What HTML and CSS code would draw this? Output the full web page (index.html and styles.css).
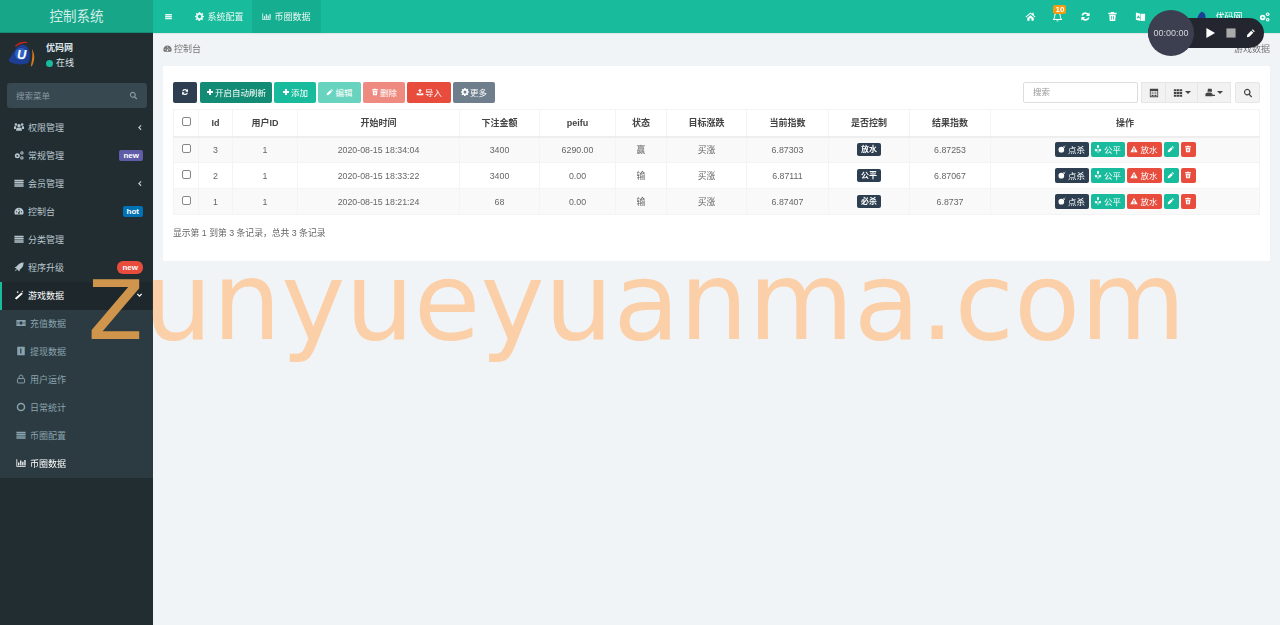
FILE: index.html
```html
<!DOCTYPE html>
<html lang="en">
<head>
<meta charset="UTF-8">
<title>控制系统</title>
<link rel="stylesheet" href="styles.css">
</head>
<body>
  <svg class="defs" xmlns="http://www.w3.org/2000/svg">
    <symbol id="i-bars" viewBox="0 0 24 24"><path d="M3 5h18v3.500H3zM3 10.300h18v3.500H3zM3 15.600h18v3.500H3z"/></symbol>
    <symbol id="i-cog" viewBox="0 0 24 24"><path fill-rule="evenodd" d="M10 2h4l.6 3 2.300 1 2.600-1.700 2.800 2.800L20 9.700l1 2.300 3 .6v3l-3 .6-1 2.300 1.700 2.600-2.800 2.800-2.600-1.700-2.300 1-.6 3h-4l-.6-3-2.300-1-2.600 1.700-2.800-2.800L4 18.500l-1-2.300-3-.6v-3l3-.6 1-2.300-1.700-2.600 2.800-2.800L7.100 6l2.300-1zM12 9.500a4.500 4.500 0 1 0 0 9 4.500 4.500 0 0 0 0-9z" transform="translate(0 -2)"/></symbol>
    <symbol id="i-chart" viewBox="0 0 24 24"><path d="M1 3h2v16h20v2H1zM5 11h3v7H5zM10 6h3v12h-3zM15 9h3v9h-3zM20 5h3v13h-3z"/></symbol>
    <symbol id="i-home" viewBox="0 0 24 24"><path d="M12 3 1 12.500l1.500 1.700L12 6l9.500 8.200 1.500-1.700-4-3.500V4h-3v2.400zM5 15l7-6 7 6v6h-5v-5h-4v5H5z"/></symbol>
    <symbol id="i-bell" viewBox="0 0 24 24"><path fill-rule="evenodd" d="M12 2c1 0 1.500.7 1.500 1.500C17 4.300 19 7 19 10.500c0 4 1 6 3 7.500v1.500H2V18c2-1.500 3-3.500 3-7.500C5 7 7 4.300 10.500 3.500 10.500 2.700 11 2 12 2zm0 3.300c-3 0-5 2-5 5.200 0 3-.6 5.300-1.800 7h13.600c-1.200-1.700-1.800-4-1.800-7 0-3.200-2-5.200-5-5.200zM9.500 20.500h5a2.500 2.500 0 0 1-5 0z"/></symbol>
    <symbol id="i-refresh" viewBox="0 0 24 24"><path d="M12 3a9 9 0 0 1 6.300 2.600L21 3v8h-8l2.900-2.900A5.600 5.600 0 0 0 6.700 10H3.200A9 9 0 0 1 12 3zM3 13h8l-2.900 2.900A5.600 5.600 0 0 0 17.300 14h3.500A9 9 0 0 1 5.700 18.400L3 21z"/></symbol>
    <symbol id="i-trash" viewBox="0 0 24 24"><path fill-rule="evenodd" d="M9 2h6l1 2h5v3H3V4h5zM5 8h14l-1 14H6zm4 3v8h1.500v-8zm4.500 0v8H15v-8z"/></symbol>
    <symbol id="i-lang" viewBox="0 0 24 24"><path fill-rule="evenodd" d="M2 3l10 3v16L2 19zm5 6-3 7h2l.5-1.300h3L10 16h2zM13 6h9v15l-9 1z" /></symbol>
    <symbol id="i-cogs" viewBox="0 0 24 24"><circle cx="8" cy="14" r="6"/><circle cx="19" cy="7" r="4"/><circle cx="19" cy="19" r="4"/><circle cx="8" cy="14" r="2.200" fill="var(--hole, #18bc9c)"/><circle cx="19" cy="7" r="1.500" fill="var(--hole, #18bc9c)"/><circle cx="19" cy="19" r="1.500" fill="var(--hole, #18bc9c)"/></symbol>
    <symbol id="i-search" viewBox="0 0 24 24"><path fill-rule="evenodd" d="M10 2a8 8 0 0 1 6.500 12.700l5.500 5.500-2.300 2.300-5.500-5.500A8 8 0 1 1 10 2zm0 3a5 5 0 1 0 0 10 5 5 0 0 0 0-10z"/></symbol>
    <symbol id="i-columns" viewBox="0 0 24 24"><path fill-rule="evenodd" d="M2 2h20v20H2zm2 5v13h16V7zm2 2h5v2H6zm0 4h5v2H6zm0 4h5v2H6zm7-8h5v2h-5zm0 4h5v2h-5zm0 4h5v2h-5z"/></symbol>
    <symbol id="i-th" viewBox="0 0 24 24"><path d="M2 3h6v5H2zM9 3h6v5H9zM16 3h6v5h-6zM2 9.500h6v5H2zM9 9.500h6v5H9zM16 9.500h6v5h-6zM2 16h6v5H2zM9 16h6v5H9zM16 16h6v5h-6z"/></symbol>
    <symbol id="i-export" viewBox="0 0 24 24"><path d="M7 2h9l1 7H6zM1 14c2-2 5-3 9-3s6 1 8 3v6H1zM17 16h7v3h-7z"/></symbol>
    <symbol id="i-plus" viewBox="0 0 24 24"><path d="M9 3h6v6h6v6h-6v6H9v-6H3V9h6z"/></symbol>
    <symbol id="i-pencil" viewBox="0 0 24 24"><path d="M16 3l5 5-2 2-5-5zM12.500 6.500l5 5L8 21l-6 1 1-6z"/></symbol>
    <symbol id="i-upload" viewBox="0 0 24 24"><path d="M12 2l6 7h-4v6h-4V9H6zM2 16h6v1.500h8V16h6v6H2z"/></symbol>
    <symbol id="i-gauge" viewBox="0 0 24 24"><path fill-rule="evenodd" d="M12 4a11 11 0 0 1 11 11c0 2-.5 3.800-1.400 5.400H2.400A11 11 0 0 1 1 15 11 11 0 0 1 12 4zm0 2.500a1.500 1.500 0 1 0 0 3 1.500 1.500 0 0 0 0-3zm-6 6a1.500 1.500 0 1 0 0 3 1.500 1.500 0 0 0 0-3zm12 0a1.500 1.500 0 1 0 0 3 1.500 1.500 0 0 0 0-3zM15 10l-4 5a2 2 0 1 0 2.500 1z"/></symbol>
    <symbol id="i-users" viewBox="0 0 24 24"><circle cx="12" cy="9" r="4"/><circle cx="4.500" cy="6" r="3"/><circle cx="19.500" cy="6" r="3"/><path d="M6 14h12l1 7H5zM0 10h5l-.500 7H0zM19 10h5v7h-4.500z"/></symbol>
    <symbol id="i-list" viewBox="0 0 24 24"><path d="M1 4h22v3.500H1zM1 8.800h22v3H1zM1 13h22v3H1zM1 17.200h22V21H1z"/></symbol>
    <symbol id="i-rocket" viewBox="0 0 24 24"><path d="M23 1c0 8-3 13-9 17l-1 5-4-4-4-4-4-1 5-3C10 5 15 1 23 1zM5 17l2 2-5 3z"/></symbol>
    <symbol id="i-magic" viewBox="0 0 24 24"><path d="M18 6l3 3L6 23l-4-3zM9 2l1 2 2 1-2 1-1 2-1-2-2-1 2-1zM20 1l.7 2 2 .7-2 .7-.7 2-.7-2-2-.7 2-.7z"/></symbol>
    <symbol id="i-money" viewBox="0 0 24 24"><path fill-rule="evenodd" d="M1 5h22v14H1zm11 3a4 4 0 1 0 0 8 4 4 0 0 0 0-8zM4 9v6h1.500V9zm14.500 0v6H20V9z"/></symbol>
    <symbol id="i-book" viewBox="0 0 24 24"><path fill-rule="evenodd" d="M3 2h18v20H3zm7 4v12h3V6z"/></symbol>
    <symbol id="i-user" viewBox="0 0 24 24"><path fill="none" stroke="currentColor" stroke-width="2.200" d="M7.500 11V7a4.500 4.500 0 0 1 9 0v4M5 11h14a1.500 1.500 0 0 1 1.500 1.500V20a1.500 1.500 0 0 1-1.500 1.500H5A1.500 1.500 0 0 1 3.500 20v-7.500A1.500 1.500 0 0 1 5 11z"/></symbol>
    <symbol id="i-circle" viewBox="0 0 24 24"><circle cx="12" cy="12" r="8.500" fill="none" stroke="currentColor" stroke-width="3.500"/></symbol>
    <symbol id="i-left" viewBox="0 0 24 24"><path d="M16 3l3 3-6 6 6 6-3 3-9-9z"/></symbol>
    <symbol id="i-down" viewBox="0 0 24 24"><path d="M3 8l3-3 6 6 6-6 3 3-9 9z"/></symbol>
    <symbol id="i-bomb" viewBox="0 0 24 24"><circle cx="10" cy="14" r="8.500"/><path d="M15 5l3-2 3 3-2 3zM21 1l2 1-1 2z"/></symbol>
    <symbol id="i-leaf" viewBox="0 0 24 24"><path d="M9 1h6v6l-2 3h-2L9 7zM2 15l3-4 6 3v2l-5 4zM22 15l-3-4-6 3v2l5 4zM10.500 19h3v4h-3z"/></symbol>
    <symbol id="i-warn" viewBox="0 0 24 24"><path fill-rule="evenodd" d="M12 2l11 20H1zm-1.500 7v7h3V9zm0 8.500V20h3v-2.500z"/></symbol>
    <symbol id="i-play" viewBox="0 0 24 24"><path d="M3 1l19 11L3 23z"/></symbol>
    <symbol id="i-stop" viewBox="0 0 24 24"><path d="M1 1h22v22H1z"/></symbol>
  </svg>

  <div class="wrapper">
    <aside class="sidebar">
      <div class="logo">控制系统</div>
      <div class="user-panel">
        <svg class="avatar" viewBox="0 0 28 28">
          <path fill="#c6231f" d="M7 6c3-4 8-5 12-4 1 .5 0 1-1 1-4 0-7 1-10 4z"/>
          <path fill="#1c3f94" d="M13 5c3-1 7 1 8 5 2 5 1 10-1 13-5 2-12 2-18-1-1-1-2-2 0-4C5 13 8 7 13 5z"/>
          <circle cx="13" cy="14" r="6" fill="#2f62c4"/>
          <path fill="#d77a1f" d="M24 9c3 5 3 11 0 17-1 1-1 0-1-1 1-5 2-10 1-16z"/>
          <text x="9" y="19" class="avatar-u">U</text>
        </svg>
        <div class="user-info">
          <div class="user-name">优码网</div>
          <div class="user-status"><span class="dot"></span>在线</div>
        </div>
      </div>
      <div class="side-search"><span>搜索菜单</span><svg class="ic"><use href="#i-search"/></svg></div>
      <ul class="menu">
        <li><svg class="ic"><use href="#i-users"/></svg><span class="grow">权限管理</span><svg class="ic arrow"><use href="#i-left"/></svg></li>
        <li><svg class="ic cogs-dark"><use href="#i-cogs"/></svg><span class="grow">常规管理</span><span class="tag tag-new">new</span></li>
        <li><svg class="ic"><use href="#i-list"/></svg><span class="grow">会员管理</span><svg class="ic arrow"><use href="#i-left"/></svg></li>
        <li><svg class="ic"><use href="#i-gauge"/></svg><span class="grow">控制台</span><span class="tag tag-hot">hot</span></li>
        <li><svg class="ic"><use href="#i-list"/></svg><span class="grow">分类管理</span></li>
        <li><svg class="ic"><use href="#i-rocket"/></svg><span class="grow">程序升级</span><span class="tag tag-red">new</span></li>
        <li class="open"><svg class="ic"><use href="#i-magic"/></svg><span class="grow">游戏数据</span><svg class="ic arrow"><use href="#i-down"/></svg></li>
      </ul>
      <ul class="submenu">
        <li><svg class="ic"><use href="#i-money"/></svg>充值数据</li>
        <li><svg class="ic"><use href="#i-book"/></svg>提现数据</li>
        <li><svg class="ic"><use href="#i-user"/></svg>用户运作</li>
        <li><svg class="ic"><use href="#i-circle"/></svg>日常统计</li>
        <li><svg class="ic"><use href="#i-list"/></svg>币圈配置</li>
        <li class="current"><svg class="ic"><use href="#i-chart"/></svg>币圈数据</li>
      </ul>
    </aside>

    <div class="main">
      <header class="topbar">
        <a class="nav-item nav-toggle"><svg class="ic"><use href="#i-bars"/></svg></a>
        <a class="nav-item nav-config"><svg class="ic"><use href="#i-cog"/></svg>系统配置</a>
        <a class="nav-item active"><svg class="ic"><use href="#i-chart"/></svg>币圈数据</a>
        <div class="top-right">
          <svg class="ic"><use href="#i-home"/></svg>
          <span class="bell"><svg class="ic"><use href="#i-bell"/></svg><b class="bell-badge">10</b></span>
          <svg class="ic"><use href="#i-refresh"/></svg>
          <svg class="ic"><use href="#i-trash"/></svg>
          <svg class="ic"><use href="#i-lang"/></svg>
          <span class="top-user"><svg class="top-avatar" viewBox="0 0 32 32"><path fill="#1c3f94" d="M15 4c5 0 9 5 9 11s-1 10-3 11c-4 1-11 2-17-1C5 16 9 8 15 4z"/></svg>优码网</span>
          <svg class="ic"><use href="#i-cogs"/></svg>
        </div>
      </header>

      <div class="content">
        <div class="crumbs">
          <span><svg class="ic"><use href="#i-gauge"/></svg>控制台</span>
          <span>游戏数据</span>
        </div>
        <div class="card">
          <div class="toolbar">
            <a class="btn btn-dark btn-icon"><svg class="ic"><use href="#i-refresh"/></svg></a>
            <a class="btn btn-deep"><svg class="ic"><use href="#i-plus"/></svg>开启自动刷新</a>
            <a class="btn btn-green"><svg class="ic"><use href="#i-plus"/></svg>添加</a>
            <a class="btn btn-green faded btn-edit"><svg class="ic"><use href="#i-pencil"/></svg>编辑</a>
            <a class="btn btn-red faded"><svg class="ic"><use href="#i-trash"/></svg>删除</a>
            <a class="btn btn-red btn-import"><svg class="ic"><use href="#i-upload"/></svg>导入</a>
            <a class="btn btn-grey"><svg class="ic"><use href="#i-cog"/></svg>更多</a>
            <div class="tools-right">
              <div class="table-search">搜索</div>
              <div class="btn-group">
                <a class="tool"><svg class="ic"><use href="#i-columns"/></svg></a>
                <a class="tool"><svg class="ic"><use href="#i-th"/></svg><i class="caret"></i></a>
                <a class="tool"><svg class="ic"><use href="#i-export"/></svg><i class="caret"></i></a>
              </div>
              <a class="tool tool-single"><svg class="ic"><use href="#i-search"/></svg></a>
            </div>
          </div>

          <table class="data">
            <colgroup>
              <col class="c-check"><col class="c-id"><col class="c-uid"><col class="c-time"><col class="c-bet">
              <col class="c-pei"><col class="c-state"><col class="c-bet"><col class="c-cur"><col class="c-index"><col class="c-index"><col>
            </colgroup>
            <thead>
              <tr>
                <th><span class="check"></span></th><th>Id</th><th>用户ID</th><th>开始时间</th><th>下注金额</th><th>peifu</th>
                <th>状态</th><th>目标涨跌</th><th>当前指数</th><th>是否控制</th><th>结果指数</th><th>操作</th>
              </tr>
            </thead>
            <tbody>
              <tr>
                <td><span class="check"></span></td><td>3</td><td>1</td><td>2020-08-15 18:34:04</td><td>3400</td><td>6290.00</td>
                <td>赢</td><td>买涨</td><td>6.87303</td><td><span class="label">放水</span></td><td>6.87253</td>
                <td><div class="ops">
                  <a class="op btn-dark"><svg class="ic"><use href="#i-bomb"/></svg>点杀</a>
                  <a class="op btn-green"><svg class="ic"><use href="#i-leaf"/></svg>公平</a>
                  <a class="op btn-red op-wide"><svg class="ic"><use href="#i-warn"/></svg>放水</a>
                  <a class="op op-icon btn-green"><svg class="ic"><use href="#i-pencil"/></svg></a>
                  <a class="op op-icon btn-red"><svg class="ic"><use href="#i-trash"/></svg></a>
                </div></td>
              </tr>
              <tr>
                <td><span class="check"></span></td><td>2</td><td>1</td><td>2020-08-15 18:33:22</td><td>3400</td><td>0.00</td>
                <td>输</td><td>买涨</td><td>6.87111</td><td><span class="label">公平</span></td><td>6.87067</td>
                <td><div class="ops">
                  <a class="op btn-dark"><svg class="ic"><use href="#i-bomb"/></svg>点杀</a>
                  <a class="op btn-green"><svg class="ic"><use href="#i-leaf"/></svg>公平</a>
                  <a class="op btn-red op-wide"><svg class="ic"><use href="#i-warn"/></svg>放水</a>
                  <a class="op op-icon btn-green"><svg class="ic"><use href="#i-pencil"/></svg></a>
                  <a class="op op-icon btn-red"><svg class="ic"><use href="#i-trash"/></svg></a>
                </div></td>
              </tr>
              <tr>
                <td><span class="check"></span></td><td>1</td><td>1</td><td>2020-08-15 18:21:24</td><td>68</td><td>0.00</td>
                <td>输</td><td>买涨</td><td>6.87407</td><td><span class="label">必杀</span></td><td>6.8737</td>
                <td><div class="ops">
                  <a class="op btn-dark"><svg class="ic"><use href="#i-bomb"/></svg>点杀</a>
                  <a class="op btn-green"><svg class="ic"><use href="#i-leaf"/></svg>公平</a>
                  <a class="op btn-red op-wide"><svg class="ic"><use href="#i-warn"/></svg>放水</a>
                  <a class="op op-icon btn-green"><svg class="ic"><use href="#i-pencil"/></svg></a>
                  <a class="op op-icon btn-red"><svg class="ic"><use href="#i-trash"/></svg></a>
                </div></td>
              </tr>
            </tbody>
          </table>
          <div class="pager-info">显示第 1 到第 3 条记录，总共 3 条记录</div>
        </div>
      </div>
    </div>
  </div>

  <!-- screen recorder widget over the page -->
  <div class="recorder">
    <div class="rec-time">00:00:00</div>
    <svg class="rec-ic rec-play"><use href="#i-play"/></svg>
    <svg class="rec-ic rec-stop"><use href="#i-stop"/></svg>
    <svg class="rec-ic"><use href="#i-pencil"/></svg>
  </div>

  <div class="watermark"><span class="wm-first">z</span>unyueyuanma.com</div>
</body>
</html>
```

FILE: styles.css
```css
/* Basic layout */
* {
  box-sizing: border-box;
}
html, body {
  margin: 0;
  height: 100%;
  overflow: hidden;
}
body {
  font-family: "Liberation Sans", "Noto Sans CJK SC", sans-serif;
  font-size: 9px;
  color: #666;
  background: #f1f4f6;
  /* the source capture is slightly soft */
  filter: blur(.3px);
}
.defs {
  position: absolute;
  width: 0;
  height: 0;
}
.ic {
  width: 10px;
  height: 10px;
  fill: currentColor;
  flex: none;
}
.wrapper {
  display: flex;
  height: 625px;
}

/* Sidebar */
.sidebar {
  width: 153px;
  flex: none;
  background: #222d32;
  color: #b8c7ce;
}
.logo {
  height: 33px;
  line-height: 33px;
  text-align: center;
  font-size: 13.5px;
  color: #d0eee7;
  background: #18a689;
  border-bottom: 1px solid #148f76;
}
.user-panel {
  display: flex;
  height: 50px;
  padding: 7px 0 0 8px;
}
.avatar {
  width: 28px;
  height: 28px;
}
.avatar-u {
  font-size: 13px;
  font-weight: bold;
  font-style: italic;
  fill: #fff;
}
.user-info {
  margin-left: 10px;
  padding-top: 1px;
  line-height: 15px;
  color: #dfe6ea;
}
.user-name {
  font-weight: bold;
}
.user-status {
  display: flex;
  align-items: center;
}
.dot {
  width: 7px;
  height: 7px;
  margin-right: 3px;
  border-radius: 50%;
  background: #18bc9c;
}
.side-search {
  display: flex;
  align-items: center;
  justify-content: space-between;
  height: 25px;
  margin: 0 6px 6px 7px;
  padding: 0 9px 1px;
  border-radius: 3px;
  background: #374850;
  color: #8a9aa2;
  font-size: 8.5px;
}
.side-search .ic {
  width: 9px;
  height: 9px;
}
.menu, .submenu {
  list-style: none;
  margin: 0;
  padding: 0;
}
.menu li {
  display: flex;
  align-items: center;
  height: 28px;
  padding: 0 10px 2px 14px;
}
.menu .ic {
  margin-right: 4px;
}
.menu .grow {
  flex: 1;
}
.menu .arrow {
  width: 7px;
  height: 7px;
  margin-right: 0;
}
.menu .open {
  background: #1e282c;
  border-left: 2px solid #18bc9c;
  padding-left: 12px;
  color: #fff;
}
.cogs-dark {
  --hole: #222d32;
}
.tag {
  padding: 1px 4px;
  border-radius: 2px;
  font-size: 8px;
  font-weight: bold;
  line-height: 9px;
  color: #fff;
}
.tag-new {
  background: #605ca8;
}
.tag-hot {
  background: #0073b7;
}
.tag-red {
  background: #e74c3c;
  border-radius: 6px;
  padding: 2px 5px;
}
.submenu {
  background: #2c3b41;
  color: #8aa4af;
}
.submenu li {
  display: flex;
  align-items: center;
  height: 28px;
  padding: 0 0 2px 16px;
}
.submenu .ic {
  margin-right: 4px;
}
.submenu .current {
  color: #fff;
}

/* Top bar */
.main {
  flex: 1;
  min-width: 0;
}
.topbar {
  display: flex;
  align-items: stretch;
  height: 33px;
  background: #18bc9c;
  color: #e8f8f5;
  box-shadow: 0 1px 1px rgba(0, 0, 0, .06);
}
.nav-item {
  display: flex;
  align-items: center;
  padding: 0 10px 1px;
}
.nav-item .ic {
  width: 9px;
  height: 9px;
  margin-right: 3.5px;
}
.nav-toggle {
  padding: 0 8.5px 0 11px;
}
.nav-config {
  padding-right: 8.5px;
}
.nav-item.active {
  background: #16ae90;
}
.top-right {
  display: flex;
  align-items: center;
  gap: 16.5px;
  margin-left: auto;
  padding-right: 10px;
  color: #fff;
}
.top-right .ic {
  width: 11px;
  height: 11px;
}
.bell {
  position: relative;
  display: flex;
}
.bell-badge {
  position: absolute;
  left: 1px;
  top: -6px;
  padding: 0 2px;
  border-radius: 2px;
  background: #f39c12;
  font-size: 8px;
  line-height: 9px;
  color: #fff;
}
.top-user {
  display: flex;
  align-items: center;
  gap: 6px;
  margin-left: 33px;
}
.top-avatar {
  width: 14px;
  height: 14px;
}

/* Content */
.content {
  padding: 0 10px;
}
.crumbs {
  display: flex;
  justify-content: space-between;
  height: 33px;
  padding-top: 11px;
  line-height: 11px;
  color: #777;
}
.crumbs .ic {
  width: 9px;
  height: 9px;
  margin-right: 2px;
  vertical-align: -1px;
}
.card {
  height: 195px;
  padding: 16px 10px 0;
  background: #fff;
}
.toolbar {
  display: flex;
  gap: 2px;
  height: 21px;
  margin-bottom: 6px;
}
.btn {
  display: flex;
  align-items: center;
  justify-content: center;
  height: 21px;
  width: 42px;
  padding-bottom: 1px;
  border-radius: 2px;
  color: #fff;
  font-size: 8.5px;
}
.btn .ic {
  width: 8px;
  height: 8px;
  margin-right: 1px;
}
.btn-icon {
  width: 24px;
  margin-right: 1px;
}
.btn-edit {
  width: 43px;
}
.btn-import {
  width: 44px;
}
.btn-dark {
  background: #2c3e50;
  color: #fff;
}
.btn-deep {
  background: #128c74;
  width: 72px;
}
.btn-green {
  background: #18bc9c;
}
.btn-red {
  background: #e74c3c;
}
.btn-grey {
  background: #6f7e8c;
}
.faded {
  opacity: .65;
}
.tools-right {
  display: flex;
  margin-left: auto;
}
.table-search {
  width: 115px;
  height: 21px;
  margin-right: 3px;
  padding-left: 9px;
  border: 1px solid #ddd;
  border-radius: 2px;
  line-height: 19px;
  color: #999;
  font-size: 8.5px;
}
.btn-group {
  display: flex;
  margin-right: 4px;
}
.tool {
  display: flex;
  align-items: center;
  justify-content: center;
  height: 21px;
  width: 25px;
  gap: 2px;
  background: #f2f2f2;
  border: 1px solid #e6e6e6;
  color: #444;
}
.btn-group .tool:nth-child(2) {
  width: 32px;
  border-left: 0;
}
.btn-group .tool:nth-child(3) {
  width: 33px;
  border-left: 0;
}
.tool-single {
  border-radius: 2px;
}
.caret {
  width: 0;
  height: 0;
  border: 3px solid transparent;
  border-top-color: #444;
  border-bottom: 0;
}

/* Table */
.data {
  width: 1087px;
  table-layout: fixed;
  border-collapse: collapse;
  text-align: center;
}
.c-check { width: 25px; }
.c-id { width: 34px; }
.c-uid { width: 65px; }
.c-time { width: 162px; }
.c-bet { width: 80px; }
.c-pei { width: 76px; }
.c-state { width: 51px; }
.c-cur { width: 82px; }
.c-index { width: 81px; }
.data th, .data td {
  padding: 0;
  border: 1px solid #f4f4f4;
}
.data th {
  height: 27px;
  border-bottom: 2px solid #eee;
  color: #444;
  font-weight: bold;
}
.data td {
  height: 26px;
  font-size: 8.8px;
  color: #666;
}
.data tbody tr:nth-child(odd) {
  background: #f9f9f9;
}
.check {
  display: inline-block;
  width: 9px;
  height: 9px;
  margin-bottom: 2px;
  vertical-align: middle;
  background: #fff;
  border: 1px solid #888;
  border-radius: 2px;
}
.label {
  display: inline-block;
  padding: 1px 4px;
  border-radius: 2px;
  background: #2c3e50;
  color: #fff;
  font-size: 8px;
  font-weight: bold;
  line-height: 11px;
}
.ops {
  display: flex;
  justify-content: center;
  gap: 2px;
}
.op {
  display: flex;
  align-items: center;
  justify-content: center;
  gap: 2px;
  height: 15px;
  width: 34px;
  padding-bottom: 1px;
  border-radius: 2px;
  color: #fff;
  font-size: 8.5px;
}
.op .ic {
  width: 8px;
  height: 8px;
}
.op-wide {
  width: 35px;
}
.op-icon {
  width: 15px;
}
.pager-info {
  margin-top: 11px;
  color: #666;
  font-size: 8.8px;
}

/* Recorder */
.recorder {
  position: absolute;
  left: 1148px;
  top: 18px;
  display: flex;
  align-items: center;
  gap: 10px;
  width: 116px;
  height: 30px;
  padding-left: 57px;
  border-radius: 15px;
  background: #23252f;
  color: #fff;
}
.rec-time {
  position: absolute;
  left: 0;
  top: -8px;
  width: 46px;
  height: 46px;
  border-radius: 50%;
  background: #3c3f4f;
  color: #d6d6dc;
  font-size: 9px;
  line-height: 46px;
  text-align: center;
}
.rec-ic {
  width: 10px;
  height: 10px;
  fill: currentColor;
}
.rec-play {
  width: 11px;
  height: 12px;
}
.rec-stop {
  color: #aaa;
}

/* Watermark */
.watermark {
  position: absolute;
  left: 87px;
  top: 236.5px;
  font-family: "DejaVu Sans", sans-serif;
  font-size: 108.3px;
  line-height: 130px;
  white-space: nowrap;
  color: #fbcfa8;
  pointer-events: none;
}
.wm-first {
  color: #d0954c;
}
```
